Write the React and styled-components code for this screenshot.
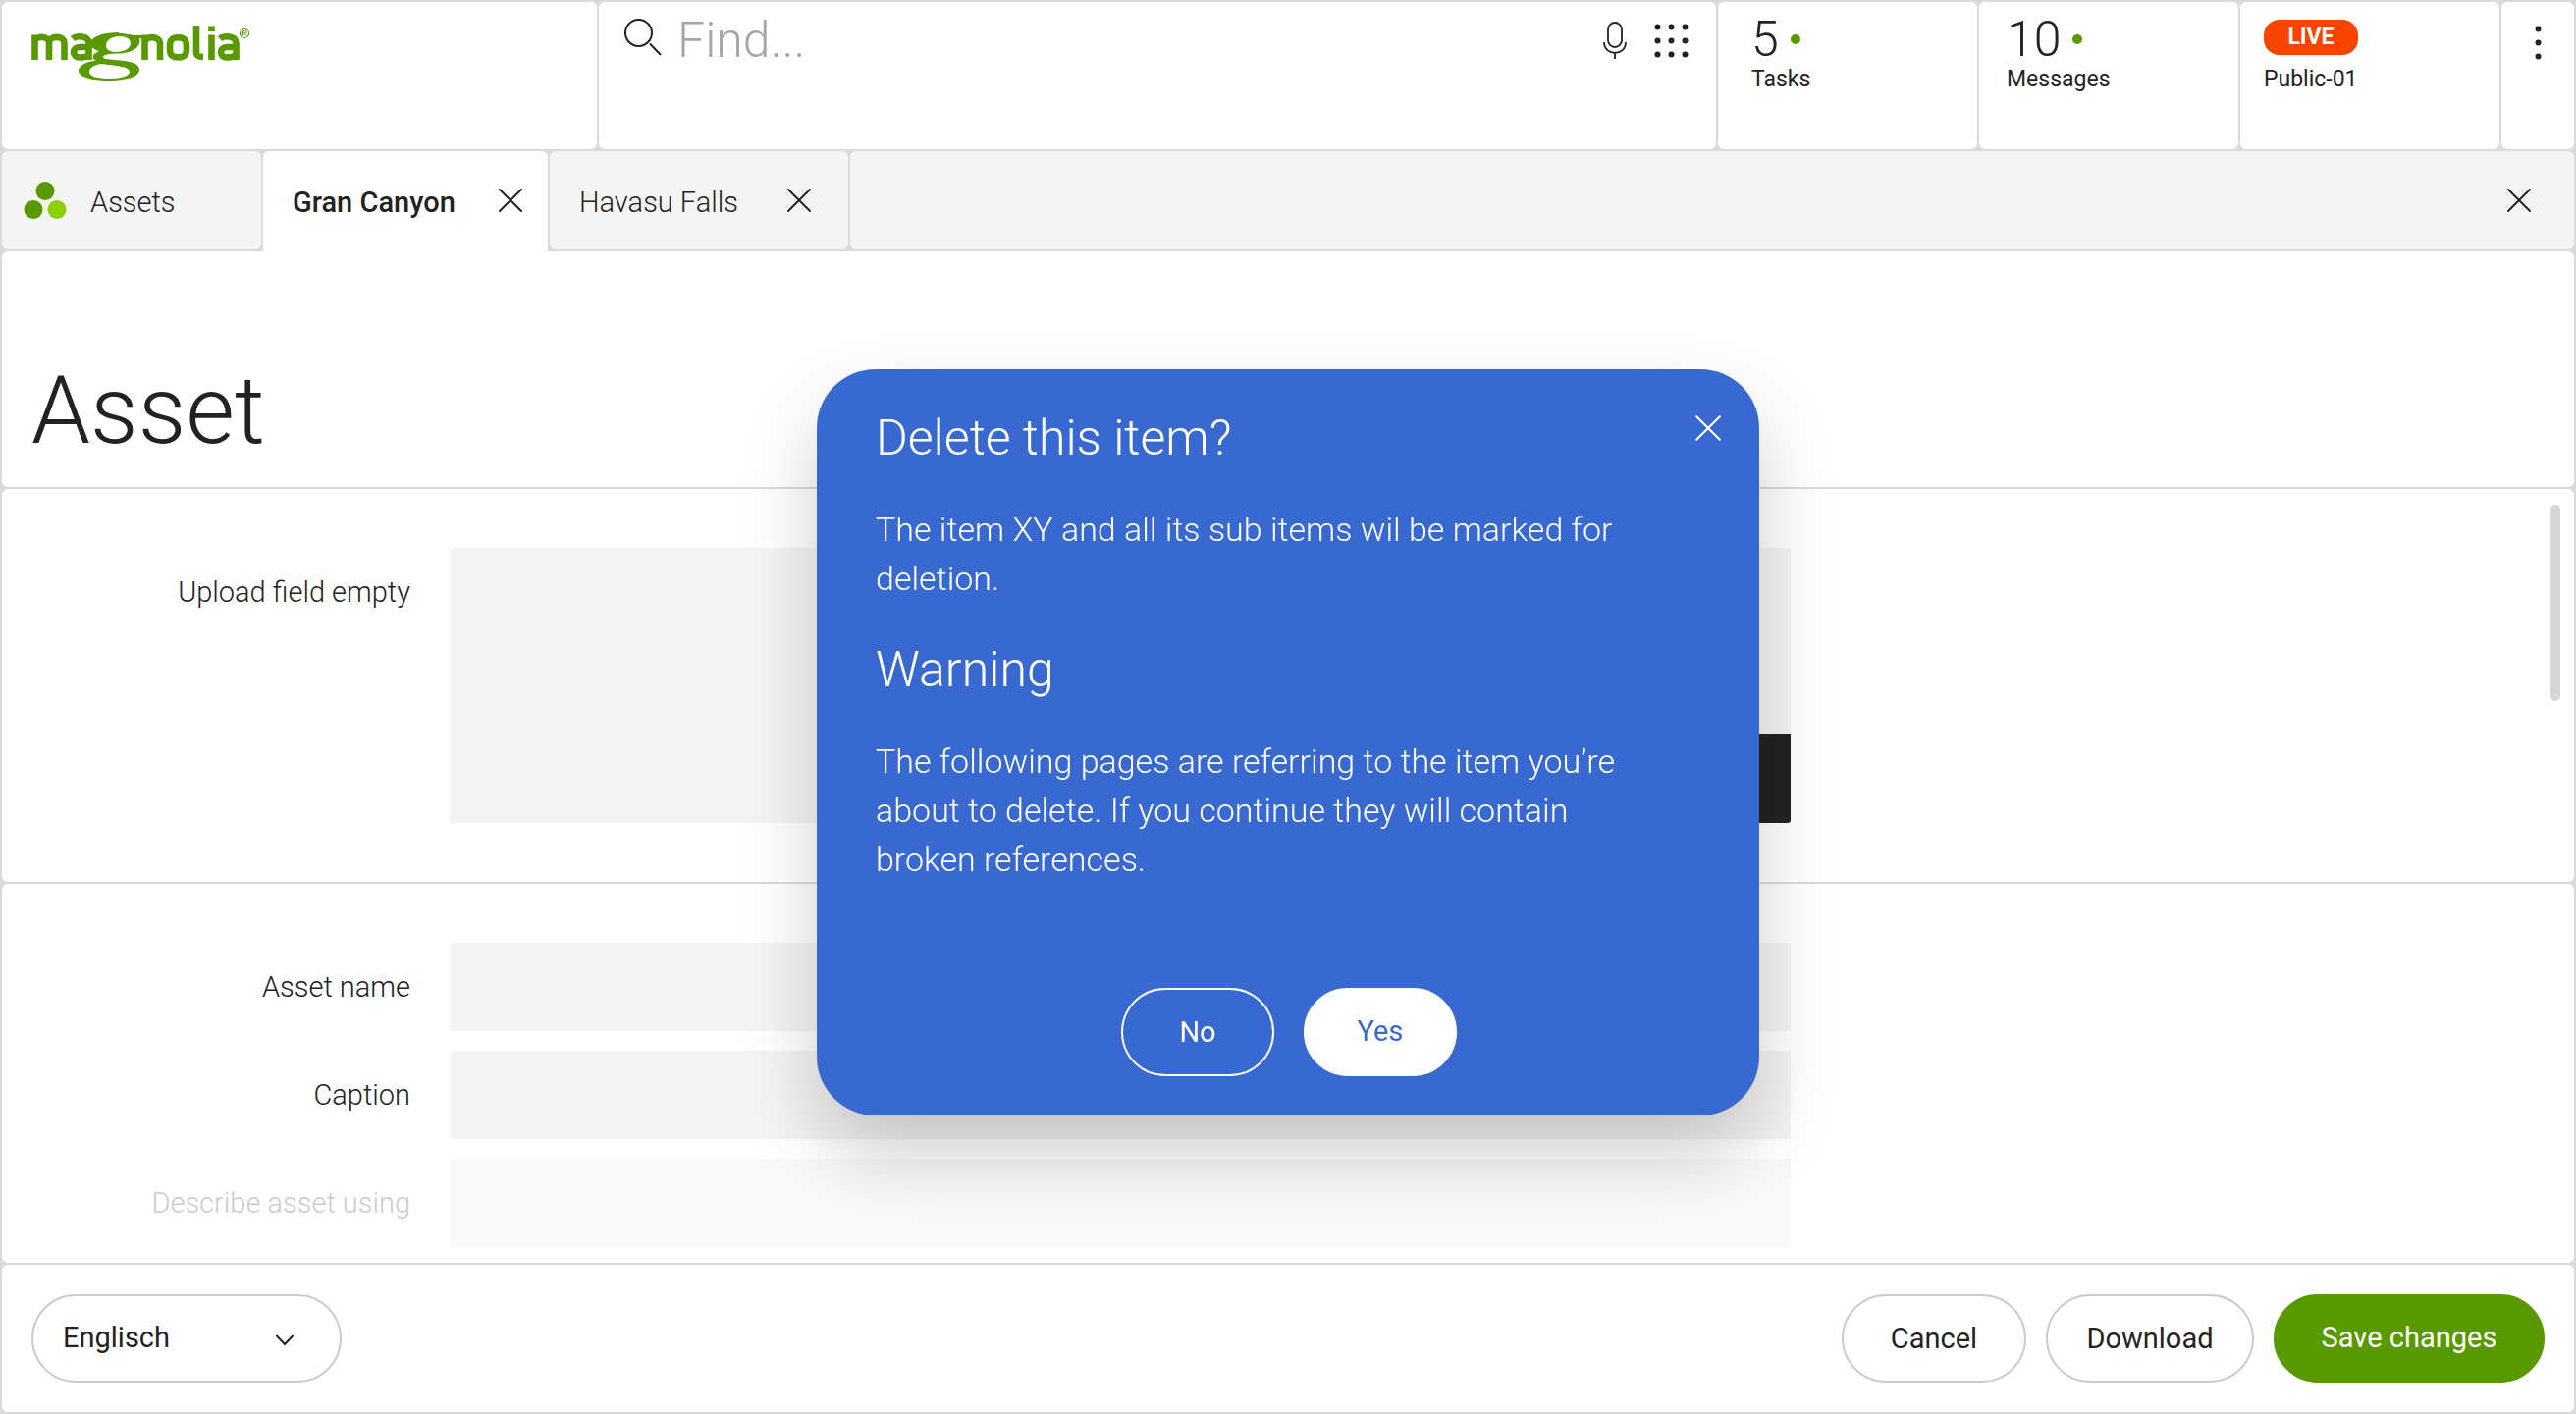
import React from "react";
import styled, { createGlobalStyle } from "styled-components";

const color = {
  line: "#dadada",
  ink: "#222222",
  panel: "#ffffff",
  muted: "#f4f4f4",
  outline: "#cbcbcb",
  green: "#589900",
  lime: "#8bd100",
  blue: "#3769d1",
  live: "#f94400",
};

const GlobalStyle = createGlobalStyle`
  *, *::before, *::after { box-sizing: border-box; }
  html, body, #root { height: 100%; }
  body {
    margin: 0;
    background: ${color.line};
    color: ${color.ink};
    font-family: Roboto, "Liberation Sans", sans-serif;
    font-weight: 300;
    font-size: 29px;
  }
  h1, h2, p { margin: 0; font-weight: 300; }
  button, input, select { font: inherit; color: inherit; }
  button { cursor: pointer; }
  svg { display: block; }
`;

const Page = styled.div`
  min-height: 100%;
  padding: 2px;
  display: flex;
  flex-direction: column;
  gap: 2px;
`;

const Panel = styled.section`
  background: ${color.panel};
  border-radius: 6px;
`;

/* Top bar */
const TopBar = styled.header`
  display: flex;
  gap: 2px;
  height: 150px;
`;

const LogoCell = styled(Panel)`
  flex: none;
  width: 606px;
  padding: 22px 28px;
`;

const SearchCell = styled(Panel)`
  flex: 1;
  min-width: 0;
  padding: 12px 28px 12px 26px;
  display: flex;
  align-items: flex-start;
`;

const SearchInput = styled.input`
  flex: 1;
  min-width: 0;
  height: 54px;
  margin-left: 14px;
  padding: 0;
  border: 0;
  outline: 0;
  background: none;
  font-size: 50px;
  line-height: 54px;
  &::placeholder { color: #a6a6a6; opacity: 1; }
`;

const IconButton = styled.button`
  display: grid;
  place-items: center;
  padding: 0;
  border: 0;
  background: none;
`;

const SearchTools = styled.div`
  display: flex;
  align-items: center;
  gap: 28px;
  height: 54px;
`;

const StatusCell = styled(Panel)`
  flex: none;
  width: 264px;
  padding: 10px ${(p) => p.$inset}px;
`;

const Count = styled.div`
  display: flex;
  align-items: center;
  gap: 12px;
  height: 56px;
  font-size: 50px;
  line-height: 58px;
`;

const Dot = styled.span`
  width: 10px;
  height: 10px;
  border-radius: 50%;
  background: ${color.green};
`;

const StatusLabel = styled.div`
  font-size: 23px;
  line-height: 26px;
  font-weight: 400;
`;

const LiveRow = styled.div`
  height: 56px;
  padding-top: 8px;
`;

const LiveBadge = styled.span`
  display: block;
  width: 96px;
  height: 36px;
  border-radius: 16px;
  background: ${color.live};
  color: #fff;
  font-size: 23px;
  line-height: 36px;
  font-weight: 700;
  text-align: center;
`;

const MoreCell = styled(Panel)`
  flex: none;
  width: 74px;
  padding-top: 24px;
  display: flex;
  justify-content: center;
  align-items: flex-start;
`;

/* Tabs */
const TabBar = styled.nav`
  display: flex;
  gap: 2px;
  height: 100px;
`;

const Tab = styled.div`
  flex: none;
  display: flex;
  align-items: center;
  width: ${(p) => p.$width}px;
  padding: 0 ${(p) => p.$end}px 0 ${(p) => p.$inset}px;
  background: ${(p) => (p.$active ? color.panel : color.muted)};
  border-radius: ${(p) => (p.$active ? "6px 6px 0 0" : "6px")};
  margin-bottom: ${(p) => (p.$active ? "-2px" : "0")};
  padding-bottom: ${(p) => (p.$active ? "2px" : "0")};
`;

const TabLabel = styled.button`
  padding: 3px 0 0;
  border: 0;
  background: none;
  line-height: 40px;
  font-weight: ${(p) => (p.$active ? 500 : 300)};
  margin-right: auto;
  white-space: nowrap;
`;

const TabIcon = styled.span`
  margin-right: 24px;
`;

const TabRest = styled.div`
  flex: 1;
  display: flex;
  align-items: center;
  justify-content: flex-end;
  padding-right: 43px;
  background: ${color.muted};
  border-radius: 6px;
`;

/* Content */
const Heading = styled(Panel)`
  height: 240px;
  padding: 102px 30px 0;
`;

const Title = styled.h1`
  font-size: 96px;
  line-height: 120px;
`;

const Content = styled.main`
  flex: 1;
  position: relative;
  display: flex;
  flex-direction: column;
  gap: 2px;
`;

const FieldSet = styled(Panel)`
  padding: 60px 32px 0;
  display: flex;
  flex-direction: column;
  gap: 20px;
  height: ${(p) => (p.$tall ? "400px" : "auto")};
  flex: ${(p) => (p.$tall ? "none" : "1")};
`;

const Row = styled.div`
  display: grid;
  grid-template-columns: 384px minmax(0, 1366px);
  column-gap: 40px;
  opacity: ${(p) => (p.$faded ? 0.5 : 1)};
`;

const Label = styled.label`
  text-align: right;
  line-height: 90px;
  color: ${(p) => (p.$faded ? "#999999" : color.ink)};
`;

const TextField = styled.input`
  height: 90px;
  padding: 0 30px;
  border: 0;
  border-radius: 3px;
  background: ${color.muted};
`;

const UploadBox = styled.div`
  height: 280px;
  display: flex;
  align-items: flex-end;
  justify-content: flex-end;
  border-radius: 3px;
  overflow: hidden;
  background: ${color.muted};
`;

const UploadButton = styled.button`
  width: 240px;
  height: 90px;
  border: 0;
  background: ${color.ink};
`;

const ScrollThumb = styled.div`
  position: absolute;
  top: 16px;
  right: 14px;
  width: 10px;
  height: 200px;
  border-radius: 5px;
  background: #d6d6d6;
`;

/* Footer */
const Footer = styled.footer`
  display: flex;
  align-items: center;
  gap: 20px;
  height: 150px;
  padding: 0 30px;
  background: ${color.panel};
  border-radius: 6px;
`;

const SelectWrap = styled.div`
  position: relative;
  margin-right: auto;
`;

const Select = styled.select`
  appearance: none;
  width: 316px;
  height: 90px;
  padding: 0 30px 2px;
  border: 2px solid ${color.outline};
  border-radius: 45px;
  background: ${color.panel};
  font-weight: 400;
`;

const Chevron = styled.svg`
  position: absolute;
  right: 48px;
  top: 40px;
  pointer-events: none;
`;

const looks = {
  outline: { bg: color.panel, fg: color.ink, edge: color.outline, lift: 0 },
  primary: { bg: color.green, fg: "#ffffff", edge: color.green, lift: 2 },
  ghost: { bg: "transparent", fg: "#ffffff", edge: "#ffffff", lift: 0 },
  solid: { bg: "#ffffff", fg: color.blue, edge: "#ffffff", lift: 2 },
};

const Pill = styled.button`
  height: 90px;
  width: ${(p) => p.$width}px;
  padding: 0 0 ${(p) => looks[p.$look].lift}px;
  border: 2px solid ${(p) => looks[p.$look].edge};
  border-radius: 45px;
  background: ${(p) => looks[p.$look].bg};
  color: ${(p) => looks[p.$look].fg};
  font-weight: 400;
`;

/* Dialog */
const Overlay = styled.div`
  position: fixed;
  inset: 0;
  display: grid;
  place-items: center;
  padding-top: 72px;
`;

const Dialog = styled.div`
  position: relative;
  display: flex;
  flex-direction: column;
  width: 960px;
  height: 760px;
  padding: 40px 60px;
  border-radius: 60px;
  background: ${color.blue};
  color: #fff;
  box-shadow: 0 40px 80px rgba(0, 0, 0, 0.2);
`;

const DialogTitle = styled.h2`
  font-size: 50px;
  line-height: 60px;
`;

const DialogText = styled.p`
  max-width: 780px;
  margin: 38px 0;
  font-size: 34px;
  line-height: 50px;
`;

const DialogClose = styled(IconButton)`
  position: absolute;
  top: 46px;
  right: 38px;
`;

const DialogActions = styled.div`
  display: flex;
  justify-content: center;
  gap: 30px;
  margin-top: auto;
  padding-left: 2px;
`;

const CloseIcon = ({ size = 26, stroke = 2 }) => (
  <svg width={size} height={size} viewBox="0 0 26 26" fill="none" stroke="currentColor" strokeWidth={stroke} strokeLinecap="round">
    <path d="M2 2 24 24M24 2 2 24" />
  </svg>
);

const DotGrid = ({ cols }) => (
  <svg width={cols * 14 - 7} height="35" viewBox={`0 0 ${cols * 14 - 7} 35`} fill={color.ink}>
    {[0, 1, 2].map((r) =>
      Array.from({ length: cols }, (_, c) => (
        <circle key={`${r}-${c}`} cx={3.5 + c * 14} cy={3.5 + r * 14} r="3" />
      ))
    )}
  </svg>
);

const Logo = () => (
  <svg width="226" height="62" viewBox="30 24 226 62" role="img" aria-label="magnolia" fill="none" stroke={color.green}>
    <g strokeWidth="6.6">
      <path d="M35.500 61V35.500M35.500 43c0-7 14.500-7 14.500 1V61M50 44c0-8 15.500-8.500 15.500 0.500V61" />
      <path d="M74 39.500c4-3.500 16.500-3.500 16.500 4.500V61M90.500 48H81c-8 0-8 10.500 0 10.500 6 0 9.500-1.500 9.500-5" />
      <path d="M147.500 61V35.500M147.500 44c0-8 15.500-8 15.500 1V61" />
      <path d="M181.500 38.200c-8.500 0-8.500 5-8.500 10.200s0 10 8.500 10 8.500-5 8.500-10-0-10.200-8.500-10.200z" />
      <path d="M200 26V53c0 4 2 5 7 5" />
      <path d="M215.500 35.500V61M215.500 26.500V32" />
      <path d="M224 39.500c4-3.500 16.500-3.500 16.500 4.500V61M240.500 48H231c-8 0-8 10.500 0 10.500 6 0 9.500-1.500 9.500-5" />
    </g>
    <path
      fill={color.green}
      stroke="none"
      fillRule="evenodd"
      d="M121 34c8 0 12 2 18 2h12v3h-9c3 9-9 16-23 15.500-8 0-14 1.500-14 3.500 0 2 5 2.500 12 3 14 1 25 3 25 10 0 7-13 11-31 11-19 0-31-4-31-10 0-5 7-9 18-10.500-4-1-4-4-2-6.500l5-3c-7-2-10-5-9-9 2-6 14-10 29-10zM122 37c-9 0-14 5-14 9.500 0 4 4 6.500 10 6.500 9 0 15-4 15-9 0-4-4-7-11-7zM103 65c-7 1-12 4-12 8 0 5 9 7 20 7 14 0 21-3 21-7 0-5-12-6-29-8z"
    />
    <circle cx="249" cy="34" r="4.500" strokeWidth="1.200" />
    <path d="M247.500 36.500V31.500h2c2 0 2 2.500 0 2.500h-2M249.500 34l1.500 2.500" strokeWidth="1" />
  </svg>
);

export default function App() {
  return (
    <>
      <GlobalStyle />
      <Page>
        <TopBar>
          <LogoCell><Logo /></LogoCell>
          <SearchCell>
            <svg width="40" height="46" viewBox="0 0 40 46" fill="none" stroke={color.ink} strokeWidth="2">
              <circle cx="14.500" cy="19.500" r="13.500" />
              <path d="M26 30.500 37 42" />
            </svg>
            <SearchInput type="search" aria-label="Find" placeholder="Find..." />
            <SearchTools>
              <IconButton aria-label="Voice search">
                <svg width="24" height="40" viewBox="0 0 24 40" fill="none" stroke={color.ink} strokeWidth="1.800">
                  <rect x="5" y="2" width="14" height="25" rx="7" />
                  <path d="M1 22c0 14.500 22 14.500 22 0M12 33v6" />
                </svg>
              </IconButton>
              <IconButton aria-label="Apps"><DotGrid cols={3} /></IconButton>
            </SearchTools>
          </SearchCell>
          <StatusCell $inset={34}>
            <Count>5<Dot /></Count>
            <StatusLabel>Tasks</StatusLabel>
          </StatusCell>
          <StatusCell $inset={28}>
            <Count>10<Dot /></Count>
            <StatusLabel>Messages</StatusLabel>
          </StatusCell>
          <StatusCell $inset={24}>
            <LiveRow><LiveBadge>LIVE</LiveBadge></LiveRow>
            <StatusLabel>Public-01</StatusLabel>
          </StatusCell>
          <MoreCell><IconButton aria-label="More"><DotGrid cols={1} /></IconButton></MoreCell>
        </TopBar>

        <TabBar>
          <Tab $width={264} $inset={22} $end={26}>
            <TabIcon>
              <svg width="44" height="38" viewBox="0 0 44 38" fill={color.green}>
                <circle cx="22" cy="9.500" r="9.500" />
                <circle cx="10" cy="28.500" r="9.500" />
                <circle cx="34" cy="28.500" r="9.500" fill={color.lime} />
              </svg>
            </TabIcon>
            <TabLabel>Assets</TabLabel>
          </Tab>
          <Tab $width={290} $inset={30} $end={25} $active>
            <TabLabel $active>Gran Canyon</TabLabel>
            <IconButton aria-label="Close Gran Canyon"><CloseIcon /></IconButton>
          </Tab>
          <Tab $width={304} $inset={30} $end={37}>
            <TabLabel>Havasu Falls</TabLabel>
            <IconButton aria-label="Close Havasu Falls"><CloseIcon /></IconButton>
          </Tab>
          <TabRest>
            <IconButton aria-label="Close all"><CloseIcon /></IconButton>
          </TabRest>
        </TabBar>

        <Heading><Title>Asset</Title></Heading>

        <Content>
          <FieldSet $tall>
            <Row>
              <Label htmlFor="upload">Upload field empty</Label>
              <UploadBox><UploadButton id="upload" type="button" /></UploadBox>
            </Row>
          </FieldSet>
          <FieldSet>
            <Row>
              <Label htmlFor="name">Asset name</Label>
              <TextField id="name" />
            </Row>
            <Row>
              <Label htmlFor="caption">Caption</Label>
              <TextField id="caption" />
            </Row>
            <Row $faded>
              <Label htmlFor="describe" $faded>Describe asset using</Label>
              <TextField id="describe" />
            </Row>
          </FieldSet>
          <ScrollThumb />
        </Content>

        <Footer>
          <SelectWrap>
            <Select aria-label="Language" defaultValue="Englisch">
              <option>Englisch</option>
            </Select>
            <Chevron width="20" height="14" viewBox="0 0 20 14" fill="none" stroke={color.ink} strokeWidth="2">
              <path d="M1.500 2 10 11 18.500 2" />
            </Chevron>
          </SelectWrap>
          <Pill $look="outline" $width={188}>Cancel</Pill>
          <Pill $look="outline" $width={212}>Download</Pill>
          <Pill $look="primary" $width={276}>Save changes</Pill>
        </Footer>
      </Page>

      <Overlay>
        <Dialog role="dialog" aria-modal="true" aria-labelledby="dialog-title">
          <DialogClose aria-label="Close dialog"><CloseIcon size={28} /></DialogClose>
          <DialogTitle id="dialog-title">Delete this item?</DialogTitle>
          <DialogText>The item XY and all its sub items wil be marked for deletion.</DialogText>
          <DialogTitle>Warning</DialogTitle>
          <DialogText>
            The following pages are referring to the item you’re about to delete. If you continue they will contain broken references.
          </DialogText>
          <DialogActions>
            <Pill $look="ghost" $width={156}>No</Pill>
            <Pill $look="solid" $width={156}>Yes</Pill>
          </DialogActions>
        </Dialog>
      </Overlay>
    </>
  );
}
